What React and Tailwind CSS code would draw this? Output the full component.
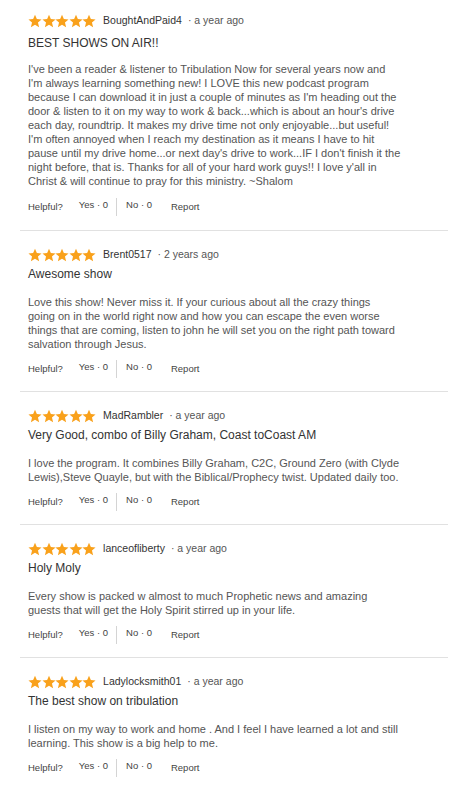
import React from 'react';

const reviews = [
  {
    user: 'BoughtAndPaid4',
    when: 'a year ago',
    title: 'BEST SHOWS ON AIR!!',
    width: 'w-[374px]',
    body: "I've been a reader & listener to Tribulation Now for several years now and I'm always learning something new! I LOVE this new podcast program because I can download it in just a couple of minutes as I'm heading out the door & listen to it on my way to work & back...which is about an hour's drive each day, roundtrip. It makes my drive time not only enjoyable...but useful! I'm often annoyed when I reach my destination as it means I have to hit pause until my drive home...or next day's drive to work...IF I don't finish it the night before, that is. Thanks for all of your hard work guys!! I love y'all in Christ & will continue to pray for this ministry. ~Shalom",
  },
  {
    user: 'Brent0517',
    when: '2 years ago',
    title: 'Awesome show',
    width: 'w-[372px]',
    body: 'Love this show! Never miss it. If your curious about all the crazy things going on in the world right now and how you can escape the even worse things that are coming, listen to john he will set you on the right path toward salvation through Jesus.',
  },
  {
    user: 'MadRambler',
    when: 'a year ago',
    title: 'Very Good, combo of Billy Graham, Coast toCoast AM',
    width: 'w-[374px]',
    body: 'I love the program. It combines Billy Graham, C2C, Ground Zero (with Clyde Lewis),Steve Quayle, but with the Biblical/Prophecy twist. Updated daily too.',
  },
  {
    user: 'lanceofliberty',
    when: 'a year ago',
    title: 'Holy Moly',
    width: 'w-[374px]',
    body: 'Every show is packed w almost to much Prophetic news and amazing guests that will get the Holy Spirit stirred up in your life.',
  },
  {
    user: 'Ladylocksmith01',
    when: 'a year ago',
    title: 'The best show on tribulation',
    width: 'w-[374px]',
    body: 'I listen on my way to work and home . And I feel I have learned a lot and still learning. This show is a big help to me.',
  },
];

const Star = () => (
  <svg viewBox="0 0 24 24" className="w-[14px] h-[14px] -mr-[0.4px]">
    <path
      fill="#f9a11b"
      d="M12 1.2l3.2 7.4 8 .7-6.1 5.3 1.9 7.9L12 18.3l-7 4.2 1.9-7.9L.8 9.3l8-.7z"
    />
  </svg>
);

const Review = ({ r, first }) => (
  <div className={`px-2 ${first ? 'pt-[14px] pb-[14px]' : 'pt-[17px] pb-[13px]'} border-b border-[#e1e1e1] last:border-b-0`}>
    <div className="flex items-center h-[14px]">
      <div className="flex">
        {[0, 1, 2, 3, 4].map((i) => (
          <Star key={i} />
        ))}
      </div>
      <span className="ml-[7px] text-[10.5px] text-[#333]">{r.user}</span>
      <span className="ml-[6px] text-[10.5px] text-[#555]">· {r.when}</span>
    </div>
    <div className={`${first ? 'mt-[8px]' : 'mt-[5px]'} text-[12px] leading-[14px] text-[#333]`}>{r.title}</div>
    <p className={`${first ? 'mt-[12px]' : 'mt-[14px]'} ${r.width} text-[11px] leading-[14px] text-[#555]`}>{r.body}</p>
    <div className={`${first ? 'mt-[10px]' : 'mt-[9px]'} flex items-center text-[9.5px] text-[#444] h-[18px]`}>
      <span>Helpful?</span>
      <span className="ml-[16px] -mt-[3px]">Yes · 0</span>
      <span className="ml-[8px] w-px h-[18px] bg-[#d4d4d4]" />
      <span className="ml-[9px] -mt-[3px]">No · 0</span>
      <span className="ml-[19px]">Report</span>
    </div>
  </div>
);

export default function App() {
  return (
    <div className="bg-white w-[454px] min-h-[785px] pl-[20px] pr-[6px] font-['Liberation_Sans',Arial,sans-serif]">
      {reviews.map((r, i) => (
        <Review key={r.user} r={r} first={i === 0} />
      ))}
    </div>
  );
}
